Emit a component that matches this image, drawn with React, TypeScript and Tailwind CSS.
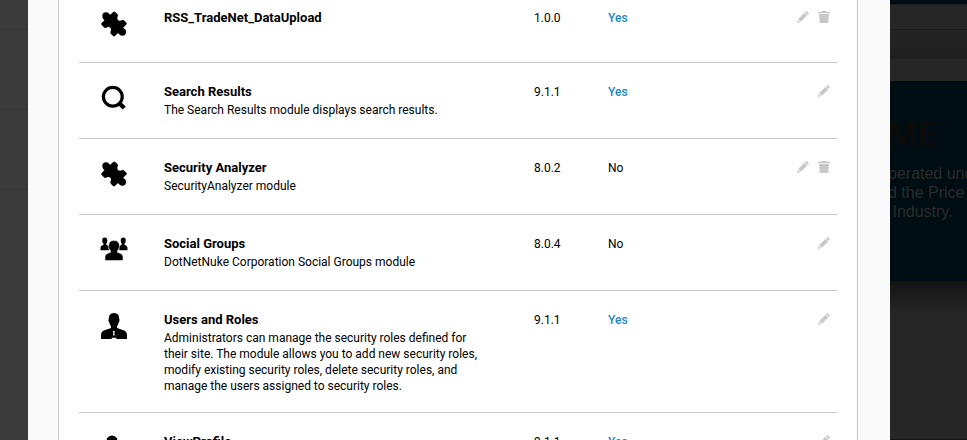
import type { ReactNode } from 'react'

function PuzzleIcon() {
  return (
    <svg viewBox="0 0 78 76" className="h-[26px] w-[26px]" aria-hidden>
      <path
        d="M40 6 L72 37 L39 70 L6 38 Z"
        stroke="currentColor"
        strokeWidth="10"
        strokeLinejoin="round"
        fill="currentColor"
      />
      <circle cx="15" cy="14" r="11" fill="currentColor" />
      <circle cx="64" cy="62" r="11" fill="currentColor" />
      <path d="M20 8 L34 12 L14 30 L6 22 Z M58 68 L44 64 L64 46 L73 58 Z" fill="currentColor" />
      <circle cx="57" cy="20" r="8" fill="#fff" />
      <path d="M50 8 L58 12 L70 26 L63 26 L52 17 Z" fill="#fff" />
      <circle cx="22" cy="55" r="8" fill="#fff" />
      <path d="M29 68 L21 64 L8 50 L16 49 L27 59 Z" fill="#fff" />
    </svg>
  )
}

function SearchIcon() {
  return (
    <svg viewBox="0 0 26 26" className="h-[26px] w-[26px]" fill="none" stroke="currentColor" aria-hidden>
      <circle cx="11.8" cy="11.8" r="9.4" strokeWidth="3.2" />
      <path d="M18 18 L23.300 23" strokeWidth="4.4" />
    </svg>
  )
}

function GroupIcon() {
  return (
    <svg viewBox="0 0 28 26" className="h-[26px] w-7" fill="currentColor" aria-hidden>
      <path d="M4.500 .5 q2.800 0 2.800 3 q0 2 -1 3.200 v1 l2.400 1.300 v4.300 h-8.200 v-2.500 q0 -2 3 -3 v-1 q-1.300 -1 -1.300 -3.300 q0 -3 2.300 -3z" />
      <path d="M23.500 .5 q-2.800 0 -2.800 3 q0 2 1 3.200 v1 l-2.400 1.300 v4.300 h8.200 v-2.500 q0 -2 -3 -3 v-1 q1.300 -1 1.300 -3.300 q0 -3 -2.300 -3z" />
      <path
        d="M14 3.500 q5.400 0 5.400 5.500 q0 3 -2 5 v1.300 q5.600 1.300 5.600 4.500 v3.700 h-18 v-3.700 q0 -3.200 5.600 -4.500 v-1.300 q-2 -2 -2 -5 q0 -5.500 5.400 -5.500z"
        stroke="#fff"
        strokeWidth="0.5"
      />
    </svg>
  )
}

function UserIcon() {
  return (
    <svg viewBox="0 0 26 26" className="h-[26px] w-[26px]" aria-hidden>
      <path
        d="M13 0 q5.300 0 5.300 6 q.8 2 -.6 3.600 q-.5 2.400 -1.700 3.600 v1.800 l6.500 2.300 q3.500 1 3.500 5 v3.700 h-26 v-3.700 q0 -4 3.500 -5 l6.500 -2.300 v-1.800 q-1.200 -1.200 -1.700 -3.600 q-1.400 -1.600 -.6 -3.600 q0 -6 5.300 -6z"
        fill="currentColor"
      />
      <path d="M11.800 18 h2 l-.4 1.800 l.3 2.700 h-1.600 l.2 -2.700z M11 24.800 h4 l.6 1.200 h-5.200z" fill="#fff" />
    </svg>
  )
}

function ProfileIcon() {
  return (
    <svg viewBox="0 0 26 26" className="h-[26px] w-[26px]" fill="currentColor" aria-hidden>
      <circle cx="11" cy="6" r="5.500" />
      <path d="M1 24 v-5 q0 -6 10 -6 t10 6 v5z" />
    </svg>
  )
}

function PencilIcon() {
  return (
    <svg viewBox="0 0 12 12" className="h-3 w-3" fill="currentColor" aria-hidden>
      <path d="M8.800 .5 q.8 -.6 1.500 0 l1.200 1.200 q.6 .7 0 1.500 l-.8 .8 l-2.700 -2.700z M7.500 1.800 l2.700 2.700 l-6.300 6.300 l-2.700 -2.700z M.8 8.800 l2.400 2.400 l-3.100 .7z" />
    </svg>
  )
}

function TrashIcon() {
  return (
    <svg viewBox="0 0 12 12" className="h-3 w-3" fill="currentColor" aria-hidden>
      <path d="M4 0 h4 v.8 h4 v1.500 h-12 v-1.500 h4z M1 3 h10 l-.8 9 h-8.400z" />
    </svg>
  )
}

interface Extension {
  name: string
  description?: string
  version: string
  inUse: boolean
  canDelete?: boolean
  icon: ReactNode
}

const EXTENSIONS: Extension[] = [
  {
    name: 'RSS_TradeNet_DataUpload',
    version: '1.0.0',
    inUse: true,
    canDelete: true,
    icon: <PuzzleIcon />,
  },
  {
    name: 'Search Results',
    description: 'The Search Results module displays search results.',
    version: '9.1.1',
    inUse: true,
    icon: <SearchIcon />,
  },
  {
    name: 'Security Analyzer',
    description: 'SecurityAnalyzer module',
    version: '8.0.2',
    inUse: false,
    canDelete: true,
    icon: <PuzzleIcon />,
  },
  {
    name: 'Social Groups',
    description: 'DotNetNuke Corporation Social Groups module',
    version: '8.0.4',
    inUse: false,
    icon: <GroupIcon />,
  },
  {
    name: 'Users and Roles',
    description:
      'Administrators can manage the security roles defined for their site. The module allows you to add new security roles, modify existing security roles, delete security roles, and manage the users assigned to security roles.',
    version: '9.1.1',
    inUse: true,
    icon: <UserIcon />,
  },
  {
    name: 'ViewProfile',
    version: '9.1.1',
    inUse: true,
    icon: <ProfileIcon />,
  },
]

function ExtensionRow({ extension }: { extension: Extension }) {
  const { name, description, version, inUse, canDelete, icon } = extension
  return (
    <tr className={`border-b border-[#c8c8c8] align-top ${description ? 'h-[76px]' : 'h-[73px]'}`}>
      <td className="pt-[22px] pl-[21px]">
        <div className="flex w-7 justify-center">{icon}</div>
      </td>
      <td className="pt-5 pr-12 pb-[18px]">
        <div className="text-[13px] leading-[18px] font-bold">{name}</div>
        {description ? <p className="mt-px leading-4">{description}</p> : null}
      </td>
      <td className="pt-5">{version}</td>
      <td className="pt-5">
        {inUse ? (
          <a href="#usage" className="font-medium text-[#1e88c3]">
            Yes
          </a>
        ) : (
          'No'
        )}
      </td>
      <td className="pt-[22px] pr-[7px]">
        <div className="flex justify-end gap-[9px] text-[#c8c8c8]">
          <button type="button" aria-label={`Edit ${name}`}>
            <PencilIcon />
          </button>
          {canDelete ? (
            <button type="button" aria-label={`Delete ${name}`}>
              <TrashIcon />
            </button>
          ) : null}
        </div>
      </td>
    </tr>
  )
}

export default function App() {
  return (
    <div className="flex h-screen overflow-hidden bg-[#3b3b3b] font-['Roboto',sans-serif] text-xs leading-[18px] text-black">
      {/* Dimmed navigation */}
      <div className="w-7 shrink-0">
        <div className="h-[30px] border-b border-[#353535]" />
        <div className="h-20 border-b border-[#353535]" />
        <div className="h-20 border-b border-[#353535]" />
      </div>

      {/* Extensions panel */}
      <main className="min-w-0 flex-1 bg-[#fafafa] pr-8 pl-[30px]">
        <div className="h-full overflow-hidden border-x border-[#c8c8c8] bg-white px-5">
          <table aria-label="Extensions" className="-mt-[11px] w-full table-fixed border-collapse">
            <colgroup>
              <col className="w-[85px]" />
              <col />
              <col className="w-[74px]" />
              <col className="w-[109px]" />
              <col className="w-[120px]" />
            </colgroup>
            <tbody>
              {EXTENSIONS.map((extension) => (
                <ExtensionRow key={extension.name} extension={extension} />
              ))}
            </tbody>
          </table>
        </div>
      </main>

      {/* Dimmed site behind the panel */}
      <aside className="flex w-[77px] shrink-0 flex-col overflow-hidden bg-[#262626] font-['Liberation_Sans',sans-serif]">
        <div className="h-1 bg-[#000d13]" />
        <div className="h-[26px] border-y border-[#1b1b1b]" />
        <div className="h-[29px] bg-linear-to-b from-[#242424] to-[#202020]" />
        <div className="mt-[22px] h-[200px] bg-[#000d13] pt-9 whitespace-nowrap">
          <h2 className="-ml-1 font-['Roboto',sans-serif] text-[35px] leading-9 font-bold text-[#0b0b0b]">ME</h2>
          <p className="-ml-[2px] pt-[11px] text-base leading-[19px] text-[#2b2b2b]">
            perated und
            <br />
            d the Price
            <br />
            &nbsp;Industry.
          </p>
        </div>
        <div className="h-8 bg-linear-to-b from-[#141414] to-[#262626]" />
        <div className="mt-auto h-px bg-[#1c141b]" />
      </aside>
    </div>
  )
}
